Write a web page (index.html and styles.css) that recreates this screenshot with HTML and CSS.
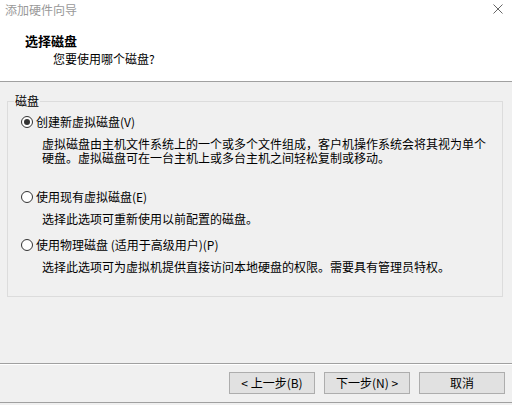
FILE: index.html
```html
<!DOCTYPE html>
<html lang="zh-CN">
<head>
<meta charset="UTF-8" />
<title>添加硬件向导</title>
<link rel="stylesheet" href="styles.css">
</head>
<body>
  <div class="wizard">
    <div class="header">
      <div class="titlebar">
        <span class="title">添加硬件向导</span>
        <svg class="close" width="10" height="10" viewBox="0 0 10 10">
          <path d="M0.5 0.5 L9.5 9.5 M9.5 0.5 L0.5 9.5" stroke="#666" stroke-width="1" fill="none" />
        </svg>
      </div>
      <div class="page-title">选择磁盘</div>
      <div class="page-sub">您要使用哪个磁盘?</div>
    </div>

    <div class="content">
      <fieldset class="group">
        <legend>磁盘</legend>
        <div class="options">
          <div class="option">
            <div class="radio-row"><span class="radio checked"></span>创建新虚拟磁盘(V)</div>
            <div class="desc">虚拟磁盘由主机文件系统上的一个或多个文件组成，客户机操作系统会将其视为单个<br>硬盘。虚拟磁盘可在一台主机上或多台主机之间轻松复制或移动。</div>
          </div>
          <div class="option second">
            <div class="radio-row"><span class="radio"></span>使用现有虚拟磁盘(E)</div>
            <div class="desc">选择此选项可重新使用以前配置的磁盘。</div>
          </div>
          <div class="option third">
            <div class="radio-row"><span class="radio"></span>使用物理磁盘 (适用于高级用户)(P)</div>
            <div class="desc">选择此选项可为虚拟机提供直接访问本地硬盘的权限。需要具有管理员特权。</div>
          </div>
        </div>
      </fieldset>
    </div>

    <div class="footer">
      <button class="btn">&lt; 上一步(B)</button>
      <button class="btn">下一步(N) &gt;</button>
      <button class="btn">取消</button>
    </div>
  </div>
</body>
</html>
```

FILE: styles.css
```css
body {
  margin: 0;
  background: #f0f0f0;
  font-family: "Noto Sans CJK SC", "Noto Sans", sans-serif;
  font-size: 12px;
  color: #000;
}
.wizard {
  width: 512px;
  height: 405px;
  overflow: hidden;
}

/* Header */
.header {
  height: 81px;
  background: #fff;
  border-bottom: 1px solid #a0a0a0;
}
.titlebar {
  height: 20px;
  line-height: 20px;
  display: flex;
  justify-content: space-between;
  align-items: center;
  padding: 0 9px 0 5px;
}
.title {
  color: #999;
}
.close {
  display: block;
  margin-top: -2px;
}
.page-title {
  margin: 14px 0 0 25px;
  line-height: 14px;
  font-size: 13px;
  font-weight: bold;
}
.page-sub {
  margin: 4px 0 0 53px;
  line-height: 14px;
}

/* Group box */
.content {
  height: 281px;
  overflow: hidden;
}
.group {
  margin: 13px 9px 0 7px;
  padding: 0 0 22px 0;
  border: 1px solid #dcdcdc;
  min-width: 0;
}
.group legend {
  margin-left: 6px;
  padding: 0 1px;
  line-height: 12px;
}
.options {
  padding: 8px 0 0 13px;
}
.radio-row {
  display: flex;
  align-items: center;
  line-height: 14px;
  height: 14px;
}
.radio {
  width: 10px;
  height: 10px;
  border: 1px solid #333;
  border-radius: 50%;
  background: #fff;
  margin-right: 3px;
  position: relative;
  flex: none;
}
.radio.checked::after {
  content: "";
  position: absolute;
  left: 2px;
  top: 2px;
  width: 6px;
  height: 6px;
  border-radius: 50%;
  background: #333;
}
.desc {
  margin: 8px 0 0 21px;
  line-height: 14px;
}
.option.second {
  margin-top: 25px;
}
.option.third {
  margin-top: 12px;
}

/* Footer */
.footer {
  border-top: 1px solid #a0a0a0;
  border-bottom: 1px solid #a0a0a0;
  box-shadow: inset 0 1px 0 #fff;
  padding: 8px 7px 8px 0;
  display: flex;
  justify-content: flex-end;
  gap: 9px;
}
.btn {
  width: 86px;
  height: 22px;
  margin: 0;
  padding: 0;
  background: #e1e1e1;
  border: 1px solid #adadad;
  font-family: inherit;
  font-size: 12px;
  color: #000;
  line-height: 20px;
}
```
